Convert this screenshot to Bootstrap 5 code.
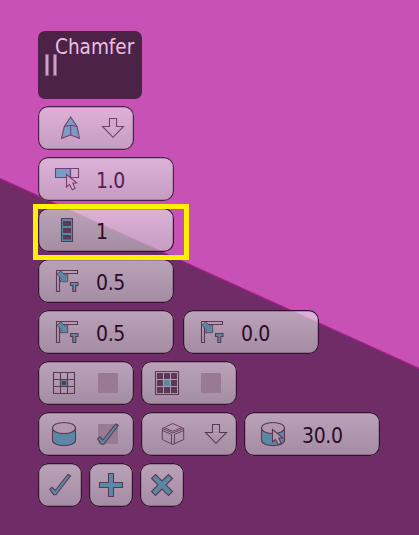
<!DOCTYPE html>
<html lang="en">
<head>
<meta charset="utf-8">
<meta name="viewport" content="width=device-width, initial-scale=1">
<title>Chamfer</title>
<link href="https://cdn.jsdelivr.net/npm/bootstrap@5.3.0/dist/css/bootstrap.min.css" rel="stylesheet">
<style>
body{width:419px;height:535px;background:#c751b4;font-family:"DejaVu Sans Condensed","DejaVu Sans","Noto Sans",sans-serif;font-stretch:condensed}
.backdrop{z-index:-1}
.panel{padding:31px 0 0 38px;gap:7px}
.title-box{width:104px;height:68px;border-radius:7px;background:#4d2247;color:#e9bfe5;font-size:20.5px;line-height:24px;padding:4px 0 0 17px}
.grip{left:7px;top:23px}
.row-gap{gap:7px}
.row-wide{gap:9px}
.tool{--line:#5b3855;--blue:#5a88a5;--fill:#b397ad;height:44px;border:0;padding:0;border-radius:10px;color:#2e0a2c;background:linear-gradient(rgba(237,243,240,.6),rgba(198,205,203,.6));box-shadow:inset 0 0 0 1.2px #35102f}
.lit{--line:#754070;--blue:#7a9cc4;--fill:#d3a6ce;color:#521d55;box-shadow:inset 0 0 0 1.2px #4a2046}
.w44{width:44px}.w96{width:96px}.w136{width:136px}
.tool svg{flex:none;stroke:var(--line);fill:none;stroke-width:1.1}
.b{fill:var(--blue)}
.k{fill:var(--line);stroke:none}
.p{fill:var(--fill)}
.q{fill:#987b93;stroke:none}
.num{font-size:21px;line-height:49px;letter-spacing:-.35px}
.marker{left:33px;top:204px;width:156px;height:56px;border:5px solid #fff000;z-index:2}
</style>
<script src="https://cdn.jsdelivr.net/npm/bootstrap@5.3.0/dist/js/bootstrap.bundle.min.js"></script>
</head>
<body class="position-relative overflow-hidden m-0">
<svg class="backdrop position-absolute top-0 start-0" width="419" height="535"><path d="M0 178.500L419 368.500V535H0Z" fill="#6f2c67"/><path d="M0 178.500L419 368.500" stroke="#aa1b8a" stroke-width="1.200"/></svg>
<svg width="0" height="0" class="position-absolute">
<defs>
<path id="down" d="M71.500 12.500h7v8h7L75 31.300 64.500 20.500h7z"/>
<path id="cursor" d="M0 0V12.500L3 10 5.800 15.200 8.600 13.700 6.300 8.800 10.200 8.300Z"/>
<path id="tick" d="M0 15.300L2.300 13.300 5.500 16.500 18.200 .500 20.800 2 6.300 20.800 4 20.800Z"/>
<g id="edge">
<path d="M18.500 11.500h21v3h-18v18h-3z"/>
<path class="b" stroke-width=".8" d="M19 15.300L22.600 11.700 27.300 16.300 29.700 14.300V22.700H21.300L23.600 20Z"/>
<path class="b" d="M32.500 23.500h7.500v3h-2.200v6h-3v-6h-2.300z"/>
</g>
<g id="drum"><path class="b" d="M14.500 16v12c0 7.500 23 7.500 23 0v-12"/><ellipse class="p" cx="26" cy="16" rx="11.500" ry="5.500"/></g>
</defs>
</svg>

<main class="panel d-flex flex-column">
<header class="title-box position-relative">Chamfer
<svg class="grip position-absolute" width="13" height="22"><path d="M.5 .500h3v21h-3zM8.500 .500h3v21h-3z" fill="#cda0c6" stroke="#8d6387"/></svg>
</header>

<div class="d-flex row-gap">
<button class="tool lit w96 d-flex" aria-label="Profile"><svg width="96" height="44"><path class="b" d="M32.700 11L39 20.500 41.500 32.300 32.700 29 23.500 32.300 26.300 20.500Z"/><path d="M26.300 20.500L32.700 19.300 39 20.500M32.700 19.300V29"/><use href="#down"/></svg></button>
</div>

<div class="d-flex row-gap">
<button class="tool lit w136 d-flex"><svg width="58" height="44"><path class="b" d="M17.500 11.500h15v9h-15z"/><path d="M32.500 11.500h8v9h-8z"/><use class="p" href="#cursor" x="28.500" y="17.500"/></svg><span class="num">1.0</span></button>
</div>

<div class="d-flex row-gap">
<button class="tool w136 d-flex"><svg width="58" height="44"><path class="b" d="M23.500 10.500h11v23h-11z"/><path class="k" d="M25 13h8v5h-8zM25 20h8v5h-8zM25 27h8v4.500h-8z"/></svg><span class="num">1</span></button>
</div>

<div class="d-flex row-gap">
<button class="tool w136 d-flex"><svg width="58" height="44"><use href="#edge"/></svg><span class="num">0.5</span></button>
</div>

<div class="d-flex row-wide">
<button class="tool w136 d-flex"><svg width="58" height="44"><use href="#edge"/></svg><span class="num">0.5</span></button>
<button class="tool w136 d-flex"><svg width="58" height="44"><use href="#edge"/></svg><span class="num">0.0</span></button>
</div>

<div class="d-flex row-gap">
<button class="tool w96 d-flex" aria-label="Inner grid"><svg width="96" height="44"><path d="M15.500 11.500h21v21h-21zM22.500 11.500v21M29.500 11.500v21M15.500 18.500h21M15.500 25.500h21"/><path class="b" d="M22.500 18.500h7v7h-7z"/><path class="k" d="M24 20h4v4h-4z"/><path class="q" d="M60 12h20v20h-20z"/></svg></button>
<button class="tool w96 d-flex" aria-label="Outer grid"><svg width="96" height="44"><path d="M14.500 10.500h23v23h-23z"/><path class="k" d="M16 12h6v6h-6zM23 12h6v6h-6zM30 12h6v6h-6zM16 19h6v6h-6zM30 19h6v6h-6zM16 26h6v6h-6zM23 26h6v6h-6zM30 26h6v6h-6z"/><path class="b" stroke="none" d="M23 19h6v6h-6z"/><path class="q" d="M60 12h20v20h-20z"/></svg></button>
</div>

<div class="d-flex row-gap">
<button class="tool w96 d-flex" aria-label="Smooth"><svg width="96" height="44"><use href="#drum"/><path class="q" d="M60 12h20v20h-20z"/><use class="b" href="#tick" x="59.500" y="11.500"/></svg></button>
<button class="tool w96 d-flex" aria-label="Box mode"><svg width="96" height="44"><path d="M31.800 11.500L42.700 16.500V27.500L31.800 32.500 21.300 27.500V16.500ZM21.300 16.500L31.800 21 42.700 16.500M21.300 18.500L30.500 22.500V32M42.700 18.500L33.500 22.500V32M23.500 15.800L31.800 19.300 40.500 15.800" stroke-width=".9"/><use href="#down"/></svg></button>
<button class="tool w136 d-flex"><svg width="58" height="44"><use href="#drum" x="3"/><use class="p" href="#cursor" x="28.500" y="17.500"/></svg><span class="num">30.0</span></button>
</div>

<div class="d-flex row-gap">
<button class="tool w44 d-flex" aria-label="Apply"><svg width="44" height="44"><use class="b" href="#tick" x="11.700" y="11"/></svg></button>
<button class="tool w44 d-flex" aria-label="Add"><svg width="44" height="44"><path class="b" d="M19.500 10.500h5v9h9v5h-9v9h-5v-9h-9v-5h9z"/></svg></button>
<button class="tool w44 d-flex" aria-label="Cancel"><svg width="44" height="44"><path class="b" d="M15.500 11.500L22 18 28.500 11.500 32.500 15.500 26 22 32.500 28.500 28.500 32.500 22 26 15.500 32.500 11.500 28.500 18 22 11.500 15.500Z"/></svg></button>
</div>
</main>
<div class="marker position-absolute"></div>
</body>
</html>
